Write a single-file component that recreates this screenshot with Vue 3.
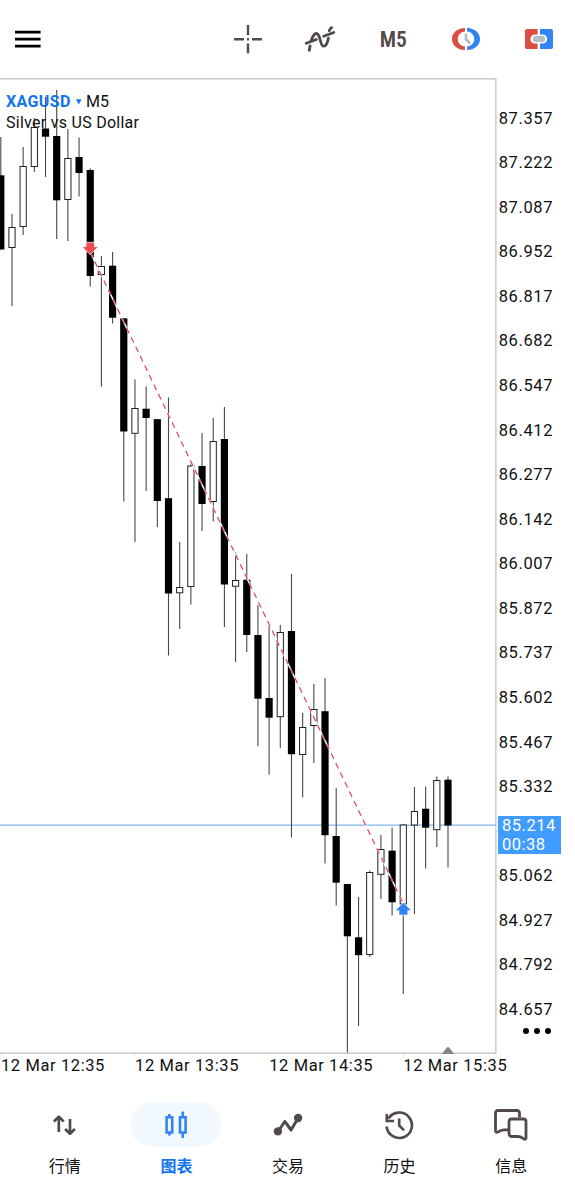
<template>
  <div class="app">
    <header class="toolbar">
      <button class="menu" aria-label="menu">
        <svg width="28" height="20" viewBox="0 0 28 20">
          <path d="M1 3.1h25.6M1 10.1h25.6M1 17.1h25.6" stroke="#000" stroke-width="2.8" />
        </svg>
      </button>

      <div class="tools">
        <button class="tool" aria-label="crosshair">
          <svg width="30" height="30" viewBox="0 0 30 30">
            <path
              d="M1 15.2h10M19 15.2h10M15 1v10M15 19.4v9.8M14 15.2h2"
              stroke="#524a48"
              stroke-width="2.4"
            />
          </svg>
        </button>

        <button class="tool" aria-label="indicators">
          <svg class="indicators" width="32" height="28" viewBox="0 0 32 28" fill="none" stroke="#524a48" stroke-width="2.8" stroke-linecap="round">
            <path d="M5.3 25.3l.8-4.5M7.2 15.7C8.800 11 10 8.500 12.200 8.500c5 0 3.200 12.700 7.500 12.700 2.800 0 3.700-3.500 4.700-8M25.200 5.800c.5-1.600 1.200-2.800 2.500-3.200" />
            <path d="M2.200 18.300l10.200-3.800M19.700 11.200L29.800 7.500" />
          </svg>
        </button>

        <button class="tool period">M5</button>

        <button class="tool" aria-label="session">
          <svg width="28" height="24" viewBox="0 0 28 24">
            <path d="M13 1C5 1 0 6 0 12s5 11 13 11v-3.500C8.500 19 5.800 16 5.800 12S8.500 5 13 4.500z" fill="#db4d43" />
            <path d="M15 1c8 0 13 5 13 11s-5 11-13 11v-3.500c4.500-.5 7.200-3.500 7.200-7.500S19.500 5 15 4.500z" fill="#3284f5" />
            <path d="M14 6.500v5.800l4 4.500" fill="none" stroke="#b2bfc6" stroke-width="2.800" />
          </svg>
        </button>

        <button class="tool" aria-label="one click trading">
          <svg width="30" height="22" viewBox="0 0 30 22">
            <path d="M3 1h10.600v5.400H11a4.600 4.600 0 0 0 0 9.200h2.600V21H3a2 2 0 0 1-2-2V3a2 2 0 0 1 2-2z" fill="#db4d43" />
            <path d="M16 1h11a2 2 0 0 1 2 2v16a2 2 0 0 1-2 2H16v-5.400h2.600a4.600 4.600 0 0 0 0-9.200H16z" fill="#3284f5" />
            <rect x="9" y="8" width="12" height="6" rx="2.600" fill="#b2bfc6" />
          </svg>
        </button>
      </div>
    </header>

    <main class="chart">
      <svg class="plot" width="498" height="977" viewBox="0 78 498 977">
        <path d="M0 78.900H495.900V1053.200H0" fill="none" stroke="#bfbfbf" stroke-width="1.200" />
        <path
          v-for="p in prices"
          :key="'tick' + p.value"
          :d="`M496 ${p.y}h2`"
          stroke="#d4d4d4"
        />
        <path d="M1 1053v3M135 1053v3M269.500 1053v3M403.500 1053v3" stroke="#c9c9c9" />
        <path d="M0 825.200H496" stroke="#7fb6ec" stroke-width="1.300" />

        <g v-for="c in candles" :key="c.x">
          <path :d="`M${c.x} ${c.high}V${c.low}`" stroke="#484848" stroke-width="1.100" />
          <rect
            v-if="c.up"
            :x="c.x - 3.1"
            :y="c.top"
            width="6.200"
            :height="c.bottom - c.top"
            fill="#fff"
            stroke="#222"
            stroke-width="1"
          />
          <rect v-else :x="c.x - 3.6" :y="c.top" width="7.200" :height="c.bottom - c.top" fill="#000" />
        </g>

        <path d="M90.200 252L403.500 904" stroke="#fff" stroke-width="1.500" />
        <path d="M90.200 252L403.500 904" stroke="#dc4650" stroke-width="1.200" stroke-dasharray="6 4.500" />

        <path
          d="M86 242.300h8.400v4.400h4l-8.200 8-8.200-8H86z"
          fill="#f04a4f"
          stroke="#fff"
          stroke-width=".7"
        />
        <path
          d="M399 915h8.800v-4.400h3.600l-8-8-8 8h3.600z"
          fill="#3284f5"
          stroke="#fff"
          stroke-width=".6"
        />
        <path d="M441.700 1053.900l5-6.200q1.300-1.200 2.600 0l5 6.200z" fill="#858585" />
      </svg>

      <div class="title">
        <div class="symbol-row">
          <span class="symbol">XAGUSD</span>
          <svg width="6" height="6" viewBox="0 0 6 6"><path d="M0 .3h5.600L2.800 5.600z" fill="#1273f2" /></svg>
          <span class="frame">M5</span>
        </div>
        <div class="name">Silver vs US Dollar</div>
      </div>

      <div class="prices">
        <div v-for="p in prices" :key="p.value" class="price">
          {{ p.hidden ? "" : p.value }}
        </div>
        <div class="current">
          <span>85.214</span>
          <span>00:38</span>
        </div>
        <svg class="more" width="30" height="8" viewBox="0 0 30 8">
          <circle cx="4" cy="4" r="3" />
          <circle cx="15" cy="4" r="3" />
          <circle cx="26" cy="4" r="3" />
        </svg>
      </div>
    </main>

    <div class="times">
      <span v-for="t in times" :key="t">{{ t }}</span>
    </div>

    <nav class="tabs">
      <button v-for="tab in tabs" :key="tab.id" class="tab" :class="{ active: tab.id === current }" @click="current = tab.id">
        <span class="pill">
          <svg v-if="tab.id === 'quotes'" width="26" height="24" viewBox="0 0 26 24" fill="none" stroke="currentColor" stroke-width="2.700" stroke-linejoin="round">
            <path d="M6.800 19V4M1.900 8.500l4.900-4.700 4.900 4.700M18 6v14.500M13.100 16l4.900 4.700 4.900-4.700" />
          </svg>
          <svg v-else-if="tab.id === 'chart'" width="24" height="28" viewBox="0 0 24 28" fill="none" stroke="currentColor" stroke-width="2.600">
            <path d="M2.600 6.300h5.600v15.200H2.600zM5.400 3v3.300M5.400 21.500v3M16 6.300h5.600v15.200H16zM18.800.5v5.800M18.800 21.500V27" />
          </svg>
          <svg v-else-if="tab.id === 'trade'" width="30" height="24" viewBox="0 0 30 24" fill="none" stroke="currentColor" stroke-width="3" stroke-linejoin="round">
            <path d="M5 18.500L11.800 8.500l6.300 8.500 7-12" />
            <circle cx="4.900" cy="18.400" r="4.200" fill="currentColor" stroke="none" />
            <circle cx="25.100" cy="5" r="4.200" fill="currentColor" stroke="none" />
          </svg>
          <svg v-else-if="tab.id === 'history'" width="30" height="30" viewBox="0 0 30 30" fill="none" stroke="currentColor" stroke-width="2.600">
            <path d="M1.600 16.500A12.700 12.700 0 1 0 3.500 8.500M1.800 4v7h7.300M14.200 8.500v7l4.800 4.800" />
          </svg>
          <svg v-else width="36" height="34" viewBox="0 0 36 34" fill="none" stroke="currentColor" stroke-width="2.800" stroke-linejoin="round">
            <path d="M26.500 9.500V5Q26.500 2.500 24 2.500H5Q2.500 2.500 2.500 5v18q.4 2 2.400 1 3-2 6-2.200H15" />
            <path d="M18.500 11h12q2.500 0 2.500 2.500v16.500q-.4 2-2.400.8-2.600-2.300-5.600-2.300h-6.500q-2.500 0-2.500-2.500V13.500q0-2.500 2.500-2.500z" />
          </svg>
        </span>
        <span class="label">{{ tab.label }}</span>
      </button>
    </nav>
  </div>
</template>

<script setup>
import { ref } from "vue";

const current = ref("chart");

const tabs = [
  { id: "quotes", label: "行情" },
  { id: "chart", label: "图表" },
  { id: "trade", label: "交易" },
  { id: "history", label: "历史" },
  { id: "messages", label: "信息" },
];

const times = ["12 Mar 12:35", "12 Mar 13:35", "12 Mar 14:35", "12 Mar 15:35"];

// the label under the current price tag is left out
const prices = Array.from({ length: 21 }, (_, i) => ({
  value: (87.357 - i * 0.135).toFixed(3),
  y: 118 + i * 44.58,
  hidden: i === 16,
}));

// up, high, body top, body bottom, low
const rows = [
  [0, 137, 175.3, 249.5, 249.5],
  [1, 214, 227.5, 247.5, 306],
  [1, 147, 166.5, 226.5, 235],
  [1, 118, 127.5, 166.5, 172],
  [0, 97, 128.5, 136.7, 177],
  [0, 90, 136, 200.3, 239],
  [1, 129, 158.5, 199.5, 241],
  [0, 137.5, 157, 173, 196.5],
  [0, 168.5, 170, 276, 286.5],
  [1, 256, 266.5, 274.5, 386.5],
  [0, 252, 265.7, 317.7, 323.5],
  [0, 318.3, 318.3, 431.5, 501.5],
  [1, 379.5, 408.5, 433.3, 542],
  [0, 386.5, 408.7, 418, 491],
  [0, 419, 419.2, 501, 527],
  [0, 397.5, 498.2, 593.5, 655.5],
  [1, 542, 587.5, 592.8, 629],
  [1, 464.5, 466, 586.5, 604.5],
  [0, 433, 466, 504, 531],
  [1, 418, 441.5, 501.5, 521.5],
  [0, 407, 439, 584.5, 627],
  [1, 552, 580.5, 586.2, 662],
  [0, 554, 579.7, 635, 652],
  [0, 605, 635, 698.7, 746],
  [0, 626, 698, 717.7, 774.5],
  [1, 625, 632.5, 716.7, 748],
  [0, 574, 631, 754.2, 837.5],
  [1, 713, 727.5, 754.5, 797.5],
  [1, 684, 709.5, 725.5, 763],
  [0, 678, 711.2, 835.2, 863.5],
  [0, 788, 836, 882.7, 905.5],
  [0, 884, 884, 936.3, 1052.5],
  [0, 897, 937.3, 955.2, 1026],
  [1, 870.5, 872.5, 954.5, 957],
  [1, 835, 849.5, 874.3, 899],
  [0, 827.5, 850.7, 902.3, 915.5],
  [1, 824, 825, 904, 994],
  [1, 787, 811.5, 825, 914],
  [0, 786.5, 808.7, 827.7, 868.5],
  [1, 776.5, 780.5, 829.7, 847],
  [0, 776.5, 779.7, 825.5, 867.5],
];

const candles = rows.map(([up, high, top, bottom, low], i) => ({
  x: +(0.8 + i * 11.18).toFixed(2),
  up,
  high,
  top,
  bottom,
  low,
}));
</script>

<style>
body {
  margin: 0;
  background: #fff;
}
</style>

<style scoped>
.app {
  width: 575px;
  height: 1200px;
  overflow: hidden;
  display: flex;
  flex-direction: column;
  background: #fff;
  color: #111;
  font-family: Roboto, "Noto Sans CJK SC", sans-serif;
}

svg {
  display: block;
}

button {
  border: none;
  background: none;
  padding: 0;
  font-family: inherit;
  cursor: pointer;
}

.toolbar {
  height: 78px;
  flex: none;
  display: flex;
  align-items: center;
  justify-content: space-between;
  padding-left: 14px;
}

.tools {
  display: flex;
}

.tool {
  width: 72.7px;
  display: flex;
  align-items: center;
  justify-content: center;
}

.indicators {
  margin-right: 2px;
}

.period {
  color: #524a48;
  font-family: "Roboto Condensed", Roboto, sans-serif;
  font-size: 21.5px;
  font-weight: 600;
}

.chart {
  position: relative;
  height: 977px;
  flex: none;
  display: flex;
}

.plot {
  flex: none;
}

.title {
  position: absolute;
  left: 6px;
  top: 14px;
  font-size: 16px;
  line-height: 20.5px;
}

.symbol-row {
  display: flex;
  align-items: center;
}

.symbol {
  color: #1273f2;
  font-weight: 700;
  letter-spacing: 0.4px;
  width: 66px;
  margin-right: 4px;
}

.frame {
  margin-left: 4px;
}

.name {
  letter-spacing: 0.27px;
}

.prices {
  position: relative;
  padding-top: 18.5px;
}

.price {
  height: 44.58px;
  padding-left: 0.7px;
  line-height: 44.58px;
  font-size: 16.5px;
  letter-spacing: 0.6px;
  white-space: nowrap;
}

.current {
  position: absolute;
  left: 0;
  top: 737.5px;
  width: 59px;
  height: 38.5px;
  padding-left: 4px;
  display: flex;
  flex-direction: column;
  background: #409cff;
  color: #fff;
  font-size: 16.5px;
  letter-spacing: 0.5px;
  line-height: 19.5px;
}

.more {
  position: absolute;
  left: 24px;
  top: 949px;
}

.times {
  flex: none;
  height: 46px;
  display: flex;
  padding-left: 1px;
  font-size: 16.5px;
  letter-spacing: 0.6px;
  line-height: 21.5px;
}

.times span {
  width: 134.1px;
  flex: none;
  white-space: nowrap;
}

.tabs {
  display: flex;
  padding-left: 9px;
}

.tab {
  width: 111.6px;
  display: flex;
  flex-direction: column;
  align-items: center;
  color: #524a48;
}

.pill {
  width: 90px;
  height: 45px;
  margin-top: 1px;
  border-radius: 23px;
  display: flex;
  align-items: center;
  justify-content: center;
}

.label {
  margin-top: 8px;
  font-size: 16px;
  line-height: 24px;
  color: #111;
}

.active {
  color: #3284f5;
}

.active .pill {
  background: #f1f8fe;
}

.active .label {
  color: #1273f2;
  font-weight: 700;
}
</style>
